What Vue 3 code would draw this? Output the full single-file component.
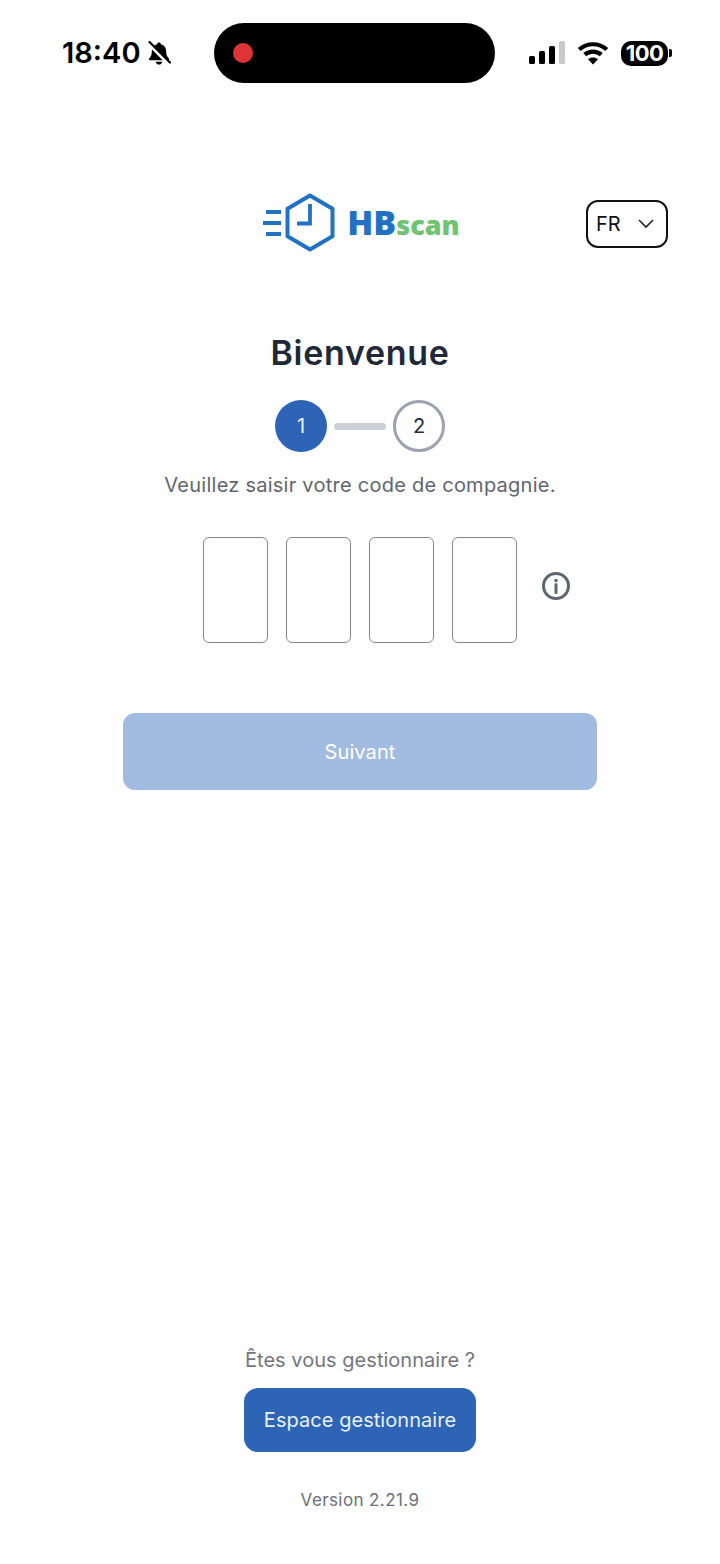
<template>
  <div class="page">
    <div class="status-bar">
      <div class="status-left">
        <span class="time">18:40</span>
        <svg class="bell" width="24" height="25" viewBox="0 0 24 25">
          <path d="M12 1.500c1 0 1.800.7 1.900 1.700 3.500.8 5.300 3.600 5.300 7.200 0 3.200.8 5 2.600 6.800.7.800.3 2-.9 2H3.100c-1.200 0-1.600-1.200-.9-2C4 15.400 4.800 13.600 4.800 10.400c0-3.600 1.800-6.400 5.300-7.200.1-1 .9-1.700 1.900-1.700z" fill="#000" />
          <path d="M8.800 20.700h6.400c-.3 1.800-1.600 2.900-3.200 2.900s-2.900-1.100-3.200-2.900z" fill="#000" />
          <path d="M1 2.500l21 21" stroke="#fff" stroke-width="3" />
          <path d="M2.500 1L23 21.500" stroke="#000" stroke-width="2.200" stroke-linecap="round" />
        </svg>
      </div>
      <div class="island"><span class="rec-dot"></span></div>
      <div class="status-right">
        <svg width="36" height="24" viewBox="0 0 36 24">
          <rect x="0" y="15" width="6" height="8" rx="1.500" fill="#000" />
          <rect x="10" y="10" width="6" height="13" rx="1.500" fill="#000" />
          <rect x="20" y="5" width="6" height="18" rx="1.500" fill="#000" />
          <rect x="30" y="0" width="6" height="23" rx="1.500" fill="#c8c8c8" />
        </svg>
        <svg class="wifi" width="32" height="24" viewBox="0 0 32 24">
          <path d="M2.200 8.500C10 1.500 22 1.500 29.800 8.500" fill="none" stroke="#000" stroke-width="4.200" />
          <path d="M7.700 13.700c4.800-4.200 11.800-4.200 16.600 0" fill="none" stroke="#000" stroke-width="4.200" />
          <path d="M11 18.200c3-2.400 7-2.400 10 0l-5 5.300z" fill="#000" />
        </svg>
        <div class="battery">
          <span class="battery-body">100</span>
          <span class="battery-nub"></span>
        </div>
      </div>
    </div>

    <div class="top-row">
      <div class="logo">
        <svg width="74" height="60" viewBox="0 0 74 60">
          <path d="M47 2.500l22.500 13.300v27.400L47 56.500 24.500 43.200V15.800z" fill="none" stroke="#2272c3" stroke-width="4" stroke-linejoin="round" />
          <path d="M47 11v19.500H34M3 19h15M0 30h18M3 41h15" fill="none" stroke="#2272c3" stroke-width="3.800" />
        </svg>
        <span class="logo-text"><span class="logo-hb">HB</span><span class="logo-scan">scan</span></span>
      </div>
      <div class="lang-select">
        <span>FR</span>
        <svg width="16" height="10" viewBox="0 0 16 10">
          <path d="M1 1l7 7 7-7" fill="none" stroke="#222" stroke-width="1.600" />
        </svg>
      </div>
    </div>

    <h1 class="title">Bienvenue</h1>

    <div class="steps">
      <div class="step step-active">1</div>
      <div class="step-line"></div>
      <div class="step step-next">2</div>
    </div>

    <p class="hint">Veuillez saisir votre code de compagnie.</p>

    <div class="code-row">
      <div class="code-boxes">
        <div v-for="n in 4" :key="n" class="code-box"></div>
      </div>
      <svg class="info" width="30" height="30" viewBox="0 0 30 30">
        <circle cx="15" cy="15" r="12.500" fill="none" stroke="#5f666f" stroke-width="3" />
        <circle cx="15" cy="9.500" r="1.800" fill="#5f666f" />
        <path d="M15 13.500v8" stroke="#5f666f" stroke-width="3" stroke-linecap="round" />
      </svg>
    </div>

    <button class="next-btn" type="button">Suivant</button>

    <div class="footer">
      <p class="manager-q">Êtes vous gestionnaire ?</p>
      <button class="manager-btn" type="button">Espace gestionnaire</button>
      <p class="version">Version 2.21.9</p>
    </div>
  </div>
</template>

<script setup>
</script>

<style>
body {
  margin: 0;
  background: #fefefe;
}
</style>

<style scoped>
.page {
  width: 720px;
  height: 1564px;
  display: flex;
  flex-direction: column;
  align-items: center;
  background: #fefefe;
  font-family: Inter, "Liberation Sans", sans-serif;
  overflow: hidden;
}

.status-bar {
  width: 100%;
  box-sizing: border-box;
  display: flex;
  align-items: center;
  padding: 23px 48px 0 62px;
}

.status-left {
  flex: 0 0 152px;
  display: flex;
  align-items: center;
  gap: 6px;
}

.time {
  font-size: 29px;
  font-weight: 600;
  color: #000;
  line-height: 36px;
}

.island {
  flex: 0 0 281px;
  height: 60px;
  border-radius: 30px;
  background: #000;
  display: flex;
  align-items: center;
  padding-left: 19px;
  box-sizing: border-box;
}

.rec-dot {
  width: 20px;
  height: 20px;
  border-radius: 50%;
  background: #e03337;
}

.status-right {
  flex: 1;
  display: flex;
  align-items: center;
  justify-content: flex-end;
  gap: 12px;
}

.battery {
  display: flex;
  align-items: center;
  gap: 1px;
}

.battery-body {
  width: 47px;
  height: 25px;
  border-radius: 10px;
  background: #000;
  color: #fff;
  font-size: 22px;
  font-weight: 700;
  line-height: 25px;
  text-align: center;
  letter-spacing: -0.5px;
}

.battery-nub {
  width: 3px;
  height: 8px;
  border-radius: 0 2px 2px 0;
  background: #000;
}

.top-row {
  width: 100%;
  display: grid;
  grid-template-columns: 1fr auto 1fr;
  align-items: center;
  margin-top: 110px;
}

.logo {
  grid-column: 2;
  display: flex;
  align-items: center;
  gap: 10px;
  margin: -1px 0 1px 3px;
}

.logo-text {
  line-height: 48px;
  padding-top: 6px;
  font-family: "Open Sans", sans-serif;
  font-weight: 800;
}

.logo-hb {
  font-size: 34px;
  color: #2272c3;
}

.logo-scan {
  font-size: 27px;
  color: #6fc56f;
}

.lang-select {
  grid-column: 3;
  justify-self: end;
  margin-right: 52px;
  width: 82px;
  height: 48px;
  box-sizing: border-box;
  border: 2px solid #111;
  border-radius: 12px;
  display: flex;
  align-items: center;
  justify-content: space-between;
  padding: 0 12px 0 8px;
  font-size: 20px;
  color: #111;
}

.title {
  margin: 77px 0 0;
  font-size: 34px;
  line-height: 44px;
  font-weight: 600;
  letter-spacing: 0.7px;
  color: #1f2937;
}

.steps {
  display: flex;
  align-items: center;
  gap: 7px;
  margin-top: 25px;
}

.step {
  width: 52px;
  height: 52px;
  box-sizing: border-box;
  border-radius: 50%;
  display: flex;
  align-items: center;
  justify-content: center;
  font-size: 20px;
}

.step-active {
  background: #2d64b5;
  color: #e8f0fb;
}

.step-next {
  border: 3px solid #9ca3af;
  color: #1f2937;
}

.step-line {
  width: 52px;
  height: 7px;
  border-radius: 4px;
  background: #cbd0d6;
}

.hint {
  margin: 19px 0 0;
  font-size: 20px;
  line-height: 28px;
  letter-spacing: 0.25px;
  color: #5f666f;
}

.code-row {
  width: 100%;
  display: grid;
  grid-template-columns: 1fr auto 1fr;
  align-items: center;
  margin-top: 38px;
}

.code-boxes {
  grid-column: 2;
  display: flex;
  gap: 18px;
}

.code-box {
  width: 65px;
  height: 106px;
  box-sizing: border-box;
  border: 1px solid #85888c;
  border-radius: 6px;
}

.info {
  grid-column: 3;
  margin-left: 24px;
  margin-top: -8px;
}

.next-btn {
  width: 474px;
  height: 77px;
  margin-top: 70px;
  border: none;
  border-radius: 12px;
  background: #a2bbe0;
  color: #fff;
  font-family: inherit;
  font-size: 20px;
  letter-spacing: 0.1px;
}

.footer {
  margin-top: auto;
  padding-bottom: 52px;
  display: flex;
  flex-direction: column;
  align-items: center;
}

.manager-q {
  margin: 0;
  font-size: 20px;
  line-height: 28px;
  letter-spacing: 0.03px;
  color: #73777d;
}

.manager-btn {
  width: 232px;
  height: 64px;
  margin-top: 14px;
  border: none;
  border-radius: 14px;
  background: #2d64b5;
  color: #e8f0fb;
  font-family: inherit;
  font-size: 20px;
  letter-spacing: 0.05px;
}

.version {
  margin: 36px 0 0;
  font-size: 17px;
  line-height: 24px;
  letter-spacing: 0.4px;
  color: #6b7076;
}
</style>
